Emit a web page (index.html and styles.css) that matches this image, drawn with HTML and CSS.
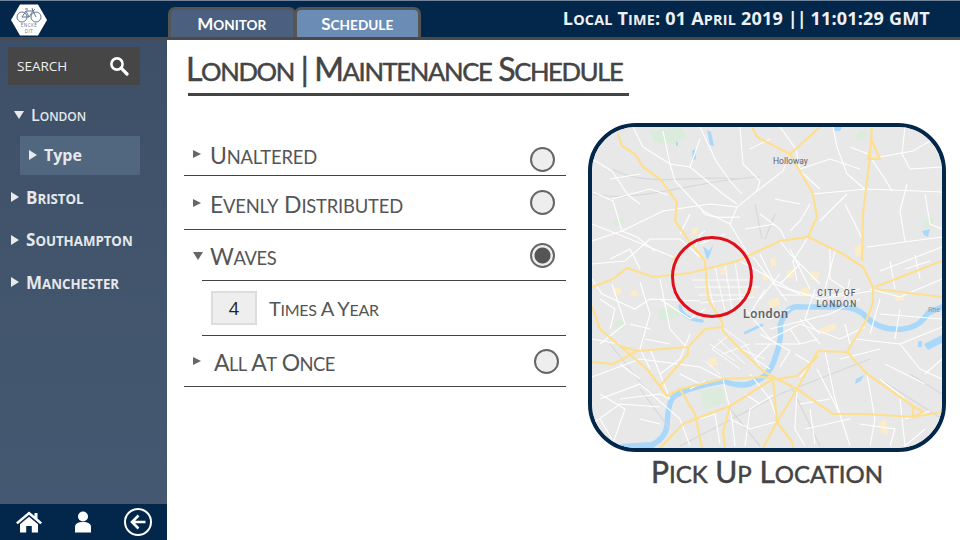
FILE: index.html
```html
<!DOCTYPE html>
<html lang="en">

<head>
    <meta charset="UTF-8">
    <title>London | Maintenance Schedule</title>
    <link rel="stylesheet" href="styles.css">
</head>

<body>
    <div class="app">
        <header class="topbar">
            <div class="logo_cell">
                <svg class="logo" viewBox="0 0 36 32" width="36" height="32">
                    <polygon points="9,0.5 27,0.5 36,16 27,31.5 9,31.5 0,16" fill="#fff" />
                    <g fill="none" stroke="#5f7690" stroke-width="1">
                        <circle cx="11" cy="13" r="5" />
                        <circle cx="25" cy="13" r="5" />
                        <path d="M11 13 L15 7 H22 L25 13 M15 7 L18 13 H11 M18 13 L22 7 M14 5 H17 M21 4 L22 7 L24 5" />
                    </g>
                    <text class="logo_text" x="18" y="23">ENCKE</text>
                    <text class="logo_text" x="18" y="29">DIT</text>
                </svg>
            </div>
            <nav class="tabs">
                <a class="tab sc">M<small>onitor</small></a>
                <a class="tab tab_on sc">S<small>chedule</small></a>
            </nav>
            <div class="clock sc">L<small>ocal</small> T<small>ime</small>: 01 A<small>pril</small> 2019 <span class="bars">||</span> 11:01:29 GMT</div>
        </header>

        <div class="body_row">
            <aside class="sidebar">
                <div class="search">
                    <span>SEARCH</span>
                    <svg viewBox="0 0 20 20" width="20" height="20">
                        <circle cx="8" cy="8" r="5.6" fill="none" stroke="#fff" stroke-width="2.6" />
                        <path d="M12.2 12.2 L18 18" stroke="#fff" stroke-width="3.2" stroke-linecap="round" />
                    </svg>
                </div>
                <ul class="tree">
                    <li class="tree_item tree_open"><i class="tri tri_down"></i><span class="sc">L<small>ondon</small></span></li>
                    <li class="tree_sub"><i class="tri"></i><span>Type</span></li>
                    <li class="tree_item"><i class="tri"></i><span class="sc">B<small>ristol</small></span></li>
                    <li class="tree_item"><i class="tri"></i><span class="sc">S<small>outhampton</small></span></li>
                    <li class="tree_item"><i class="tri"></i><span class="sc">M<small>anchester</small></span></li>
                </ul>
                <div class="side_foot">
                    <svg viewBox="0 0 26 22" width="26" height="22">
                        <path d="M13 0.5 L18.5 5 V2 H21.5 V7.5 L26 11.5 L24.3 13.3 L13 3.8 L1.7 13.3 L0 11.5 Z" fill="#fff" />
                        <path d="M13 5.8 L22 13.2 V21.5 H15.8 V15 H10.2 V21.5 H4 V13.2 Z" fill="#fff" />
                    </svg>
                    <svg viewBox="0 0 18 22" width="18" height="22">
                        <circle cx="9" cy="5.5" r="5" fill="#fff" />
                        <path d="M1 21.5 V16 C1 12.5 4 11 9 11 C14 11 17 12.5 17 16 V21.5 Z" fill="#fff" />
                    </svg>
                    <svg viewBox="0 0 30 30" width="30" height="30">
                        <circle cx="15" cy="15" r="13" fill="none" stroke="#fff" stroke-width="2" />
                        <path d="M15.5 8.5 L9 15 L15.5 21.5 M9.5 15 H22.5" fill="none" stroke="#fff" stroke-width="2.6" />
                    </svg>
                </div>
            </aside>

            <main class="content">
                <h1 class="page_title sc">L<small>ondon</small> | M<small>aintenance</small> S<small>chedule</small></h1>
                <div class="columns">
                    <div class="options">
                        <div class="opt opt_a">
                            <i class="tri tri_grey"></i><span class="opt_name sc">U<small>naltered</small></span><b class="radio"></b>
                        </div>
                        <div class="opt opt_b">
                            <i class="tri tri_grey"></i><span class="opt_name sc">E<small>venly</small> D<small>istributed</small></span><b class="radio"></b>
                        </div>
                        <div class="opt opt_c">
                            <i class="tri tri_grey tri_down"></i><span class="opt_name sc">W<small>aves</small></span><b class="radio radio_on"></b>
                        </div>
                        <div class="opt opt_d">
                            <input class="times" type="text" value="4"><span class="opt_name opt_small sc">T<small>imes</small> A Y<small>ear</small></span>
                        </div>
                        <div class="opt opt_e">
                            <i class="tri tri_grey"></i><span class="opt_name sc">A<small>ll</small> A<small>t</small> O<small>nce</small></span><b class="radio"></b>
                        </div>
                    </div>

                    <div class="map_col">
                        <div class="map">
                            <svg viewBox="592 128 350 321" width="350" height="321">
                                <rect x="592" y="128" width="350" height="321" fill="#e8e8e8" />

                                <g class="soft">
                                    <!-- parks, water patches, built up areas -->
                                    <g fill="#dcecdc">
                                        <path d="M648 132 L680 128 L688 138 L672 146 L655 144 Z" />
                                        <path d="M860 130 L868 134 L862 142 L854 140 Z" />
                                        <path d="M657 310 L678 308 L680 318 L660 322 Z" />
                                        <path d="M615 322 L626 320 L624 330 L616 332 Z" />
                                        <path d="M700 392 L722 388 L726 404 L704 410 Z" />
                                        <path d="M612 222 L622 218 L624 224 L616 228 Z" />
                                        <path d="M922 222 L934 218 L932 228 L924 230 Z" />
                                    </g>
                                    <g fill="#fbeccb">
                                        <path d="M770 260 L775 258 L776 266 L771 268 Z" />
                                        <path d="M764 274 L770 276 L768 282 L762 280 Z" />
                                        <path d="M786 272 L793 270 L794 278 L788 280 Z" />
                                        <path d="M812 272 L820 274 L817 282 L810 280 Z" />
                                        <path d="M745 288 L752 286 L754 294 L747 296 Z" />
                                        <path d="M612 290 L620 288 L622 294 L614 296 Z" />
                                        <path d="M630 293 L636 290 L638 296 L632 298 Z" />
                                        <path d="M768 302 L778 298 L780 306 L770 310 Z" />
                                        <path d="M800 290 L808 288 L810 296 L802 298 Z" />
                                        <path d="M854 248 L862 244 L864 254 L856 258 Z" />
                                        <path d="M895 298 L905 296 L904 301 L896 302 Z" />
                                        <path d="M708 360 L716 358 L718 366 L710 368 Z" />
                                        <path d="M878 424 L886 420 L888 436 L882 434 Z" />
                                        <path d="M820 330 L835 324 L836 330 L822 336 Z" />
                                        <path d="M692 230 L698 228 L697 236 L692 236 Z" />
                                        <path d="M720 270 L724 268 L726 275 L721 276 Z" />
                                    </g>
                                    <g fill="#a9d8fb">
                                        <path d="M703 247 L709 252 L713 246 L710 256 L707 261 Z" />
                                        <path d="M834 128 L842 128 L840 132 L835 132 Z" />
                                        <path d="M676 143 L678 143 L678 147 L676 147 Z" />
                                        <path d="M692 152 L695 150 L696 160 L693 161 Z" />
                                        <path d="M707 131 L711 133 L714 147 L710 146 Z" />
                                        <path d="M922 232 L930 230 L928 238 L924 236 Z" />
                                        <path d="M620 445 L650 443 L654 449 L620 449 Z" />
                                        <path d="M924 345 L942 336 L942 344 L928 351 Z" />
                                        <path d="M856 380 L864 376 L861 382 L855 385 Z" />
                                        <path d="M918 342 L922 342 L922 348 L918 348 Z" />
                                    </g>
                                    <g fill="none" stroke="#a9d8fb" stroke-linecap="round">
                                        <path d="M680 307 Q682 320 702 322" stroke-width="3.5" />
                                        <path d="M745 334 L762 326" stroke-width="2.5" />
                                        <path d="M650 447 Q665 440 667 427 Q668 400 676 396 Q690 388 723 382 Q745 390 755 382 Q770 378 776 356 Q782 340 780 327 Q786 306 800 308 H840 Q858 308 866 318 Q880 332 903 330 Q920 328 928 314 L942 308" stroke-width="5.5" />
                                    </g>

                                    <!-- railways -->
                                    <g fill="none" stroke="#d6d8db" stroke-width="1.2">
                                        <path d="M592 195 C640 205 700 180 760 178" />
                                        <path d="M612 170 C650 190 690 175 740 180" />
                                        <path d="M755 205 L762 240 M775 215 L765 240" />
                                        <path d="M640 390 L670 430 M790 385 L820 447" />
                                        <path d="M680 447 L780 395 L870 360 M730 410 L760 447" />
                                        <path d="M880 380 L942 420 M910 375 L942 395" />
                                        <path d="M610 345 L650 395" />
                                    </g>

                                    <!-- white streets -->
                                    <g fill="none" stroke="#fff" stroke-width="1.1">
                                        <path d="M593 193 L613 202 L622 232 L637 238 L655 252" />
                                        <path d="M633 128 L643 148 L670 165 L690 168 L723 195 L737 205" />
                                        <path d="M663 132 L670 165 L675 182 L703 212 L730 225" />
                                        <path d="M740 128 L743 165 L760 182 L757 192 L737 208 L730 225 L750 258" />
                                        <path d="M787 162 L783 172 L757 192" />
                                        <path d="M813 195 L867 190 L942 193" />
                                        <path d="M820 222 L847 195 M833 128 L837 148 L847 175 L867 192" />
                                        <path d="M880 158 L913 152 L942 135" />
                                        <path d="M907 185 L900 212 L905 242" />
                                        <path d="M867 248 L942 238 M880 272 L942 248" />
                                        <path d="M780 242 L790 255 L820 285 M808 238 L793 262 L797 282" />
                                        <path d="M753 258 L787 302" />
                                        <path d="M592 225 L630 240 L673 258" />
                                        <path d="M592 242 L622 232 L663 212 L710 205 L737 208" />
                                        <path d="M592 160 L612 172 L628 196 L640 205" />
                                        <path d="M700 128 L716 162 L730 182 L742 195" />
                                        <path d="M780 128 L796 150 L800 172 L820 190" />
                                        <path d="M905 128 L902 155 L910 170 L942 168" />
                                        <path d="M850 148 L868 155 L885 180 L892 192" />
                                        <path d="M925 195 L930 225 L942 230" />
                                        <path d="M810 205 L800 222 L790 232" />
                                        <path d="M760 215 L780 230 L785 240" />
                                        <path d="M845 205 L855 225 L862 240" />
                                        <path d="M702 212 Q705 220 740 218 M705 232 Q698 235 695 250" />
                                        <path d="M592 265 L625 262 L650 240 L680 240 L700 258" />
                                        <path d="M592 280 L602 295 L635 310 L650 300 L700 302" />
                                        <path d="M640 283 L650 315 L640 350 M660 280 L670 330 L688 350" />
                                        <path d="M612 285 L625 325 L600 345" />
                                        <path d="M740 262 L790 290 L820 300 L872 292" />
                                        <path d="M760 255 L775 285 L800 295 M790 250 L810 290 M830 250 L830 280 L845 290" />
                                        <path d="M835 252 L825 290 M860 290 L835 296 L780 296" />
                                        <path d="M745 310 L770 340 L800 325 L840 340 L865 328" />
                                        <path d="M770 330 L830 315 L860 300" />
                                        <path d="M870 290 L900 298 L942 280 M880 315 L942 320 M900 345 L942 328" />
                                        <path d="M890 262 L895 290 M915 256 L920 280 M905 270 L930 262" />
                                        <path d="M855 340 L900 345 L920 370 L942 380" />
                                        <path d="M820 345 L800 320 M825 352 L835 400 L850 447" />
                                        <path d="M867 375 L875 420 L870 447 M900 400 L905 447 L925 430" />
                                        <path d="M723 380 L732 420 L735 447" />
                                        <path d="M755 345 L800 345 L818 340" />
                                        <path d="M592 340 L620 345 M592 378 L640 360 L700 368 L723 380" />
                                        <path d="M600 400 L640 385 L680 420 L690 447" />
                                        <path d="M612 447 L625 410 L600 395 M620 400 L660 395 L670 400" />
                                        <path d="M592 425 L620 405 L660 408" />
                                        <path d="M775 423 L750 430 L730 420 M745 447 L750 410 L775 395" />
                                        <path d="M797 390 L795 430 L805 447 M800 405 L830 400 M805 430 L850 420" />
                                        <path d="M817 370 L840 415 M840 360 L880 350 M750 375 L770 400 L777 420" />
                                        <path d="M690 335 L680 360 L660 375 M650 350 L668 395" />
                                        <path d="M880 380 L905 400 M925 375 L942 360 M885 365 L925 385" />
                                        <path d="M795 355 L812 365 L800 378 M760 335 L790 352 L780 368" />
                                        <path d="M690 390 L705 382 M640 420 L660 425 M905 420 L930 412" />
                                        <path d="M612 200 L650 190 L668 196 M640 175 L610 180" />
                                        <path d="M690 168 L700 140 M770 140 L750 150 M800 170 L830 160 L860 170" />
                                        <path d="M690 215 L680 235 M725 235 L700 245 M745 230 L775 225 M775 200 L800 205" />
                                        <path d="M610 260 L630 250 L640 270 M600 300 L615 310 L610 330 M630 325 L650 330" />
                                        <path d="M660 300 L690 320 L705 310 M672 285 L680 300 M645 340 L670 345" />
                                        <path d="M765 290 L750 315 L770 320 L790 310 M780 275 L760 300 M800 265 L780 285" />
                                        <path d="M815 290 L805 320 L820 335 M850 280 L845 300 M880 300 L870 335 M900 310 L895 340" />
                                        <path d="M770 345 L755 360 L770 370 M790 330 L800 345 M845 325 L850 345" />
                                        <path d="M620 365 L640 380 M680 375 L700 385 M640 350 L650 370 M600 420 L612 440" />
                                        <path d="M700 420 L715 415 L720 445 M745 395 L760 405 M810 410 L815 445 M860 425 L895 430 L890 447" />
                                    </g>
                                    <g fill="none" stroke="#fff" stroke-width=".9">
                                        <path d="M692 281 H755 M695 288 H760 M698 296 H750 M700 304 L755 298" />
                                        <path d="M705 272 L715 312 M715 268 L725 312 M725 265 L732 310 M735 262 L742 310" />
                                        <path d="M722 328 L745 345 L763 372 M730 335 L712 350 L740 370 M718 340 L745 365 M710 345 L735 362" />
                                        <path d="M722 355 L750 345 M705 362 L720 375 M740 350 L765 360" />
                                    </g>

                                    <!-- main roads -->
                                    <g fill="none" stroke="#fddf8e" stroke-width="2.2">
                                        <path d="M618 135 L622 147 L635 155 L643 168 L660 180 L677 203 L675 222 L690 243 L705 262 L708 300 L722 323 L723 332 L737 347 L763 372 L777 380" />
                                        <path d="M592 288 L613 280 L627 269 L653 278 L690 274 L737 262 L780 242 L808 238 L843 255 L863 268 L873 288 L873 305" />
                                        <path d="M752 128 L757 138 L790 155 L813 195 L817 218 L808 238 M820 128 L790 155" />
                                        <path d="M872 128 L870 158 L863 215 L862 262 M872 142 L880 160 H868 Z" />
                                        <path d="M875 290 L942 298 M875 288 L942 262" />
                                        <path d="M592 307 L600 330 L620 347 L637 352 L688 348 L705 330 L722 328" />
                                        <path d="M592 363 L613 365 L637 352" />
                                        <path d="M620 347 L647 370 L667 397 L680 390 L723 380 L763 378 L777 380" />
                                        <path d="M688 348 V355 L660 387" />
                                        <path d="M680 390 L695 415 L702 449" />
                                        <path d="M660 449 L683 425 L695 420 L730 407 L773 380" />
                                        <path d="M730 407 L723 433 L725 449" />
                                        <path d="M773 380 L777 423 L792 443 L793 449" />
                                        <path d="M763 449 L777 423 L797 390 L818 352 L847 353 L867 320 L873 303" />
                                        <path d="M847 353 L867 375 L913 407 L923 413 L913 418 V407" />
                                        <path d="M777 380 L797 390 L833 415 L867 415 L913 418 L942 413" />
                                        <path d="M777 380 L797 377 L818 357" />
                                        <path d="M690 245 L680 255 L672 262" />
                                    </g>
                                </g>

                                <g class="map_labels">
                                    <text class="lab_small" x="773" y="165">Holloway</text>
                                    <text class="lab_city" x="837" y="297" text-anchor="middle">CITY OF</text>
                                    <text class="lab_city" x="837" y="307.5" text-anchor="middle">LONDON</text>
                                    <text class="lab_town" x="743" y="319">London</text>
                                    <text class="lab_water" x="928" y="313">Rhe</text>
                                </g>
                                <circle cx="712" cy="278" r="39.5" fill="none" stroke="#df0f1c" stroke-width="3" />
                            </svg>
                        </div>
                        <div class="map_caption sc">P<small>ick</small> U<small>p</small> L<small>ocation</small></div>
                    </div>
                </div>
            </main>
        </div>
    </div>
</body>

</html>
```

FILE: styles.css
```css
* {
    box-sizing: border-box;
}

html,
body {
    margin: 0;
    height: 100%;
    overflow: hidden;
}

body {
    font-family: "Lato", "Liberation Sans", sans-serif;
    background: #fff;
}

.app {
    width: 960px;
    height: 540px;
    display: flex;
    flex-direction: column;
}

/* small caps the way the slides had them, lower case at 80% */
.sc {
    text-transform: uppercase;
    white-space: nowrap;
}

.sc small {
    font-size: 80%;
}

/* top bar */
.topbar {
    height: 40px;
    display: flex;
    align-items: flex-end;
    background: #03274a;
    border-top: 1px solid #71849b;
    border-bottom: 3px solid #4a4a4a;
}

.logo_cell {
    width: 168px;
    height: 36px;
    padding: 3px 0 0 11px;
}

.logo {
    display: block;
}

.logo_text {
    font: 4.5px "Open Sans", sans-serif;
    fill: #5f7690;
    text-anchor: middle;
    letter-spacing: .5px;
}

.tabs {
    display: flex;
    width: 253px;
    height: 30px;
}

.tab {
    flex: 1;
    display: block;
    text-align: center;
    line-height: 28px;
    border: 3px solid #555;
    border-bottom: none;
    border-radius: 7px 7px 0 0;
    background: #4a607e;
    color: #fff;
    font-size: 17px;
    font-weight: bold;
}

.tab_on {
    margin-left: -2px;
    background: #6b8cb5;
}

.clock {
    flex: 1;
    height: 36px;
    padding-right: 30px;
    text-align: right;
    color: #eef1f4;
    font: bold 18px/34px "Open Sans", sans-serif;
    letter-spacing: .2px;
}

.bars {
    letter-spacing: -1px;
}

.body_row {
    flex: 1;
    display: flex;
    min-height: 0;
}

/* left side */
.sidebar {
    width: 167px;
    display: flex;
    flex-direction: column;
    background: linear-gradient(#3e5068, #455a72);
}

.search {
    margin: 7px 27px 0 8px;
    height: 38px;
    padding: 0 11px 0 9px;
    display: flex;
    align-items: center;
    justify-content: space-between;
    background: #464646;
    color: #eee;
    font: 13.5px "Open Sans", sans-serif;
}

.tree {
    flex: 1;
    list-style: none;
    margin: 0;
    padding: 19px 0 0;
    color: #e6e8ea;
    font: bold 17px "Open Sans", sans-serif;
}

.tree .sc small {
    font-size: 78%;
}

.tree_item {
    height: 42.5px;
    padding: 0 0 2px 11px;
    display: flex;
    align-items: center;
    gap: 7px;
}

.tree_open {
    height: 22px;
    padding-left: 14px;
    padding-bottom: 0;
    margin-bottom: 10px;
    font-size: 16px;
    font-weight: 600;
}

.tree_open .sc small {
    font-size: 75%;
}

.tree_sub {
    width: 120px;
    height: 39px;
    margin: 0 0 2px 20px;
    padding: 0 0 2px 9px;
    display: flex;
    align-items: center;
    gap: 7px;
    background: #51667f;
    font-size: 16px;
    font-weight: bold;
}

.tri {
    width: 0;
    height: 0;
    flex: none;
    border-style: solid;
    border-width: 5px 0 5px 8px;
    border-color: transparent transparent transparent #e8eaec;
}

.tri_down {
    border-width: 8px 5px 0 5px;
    border-color: #e8eaec transparent transparent transparent;
}

.tri_grey {
    border-width: 4.5px 0 4.5px 8px;
    border-left-color: #666;
}

.tri_grey.tri_down {
    border-width: 8px 5.5px 0 5.5px;
    border-color: #666 transparent transparent transparent;
}

.side_foot {
    height: 36px;
    display: flex;
    align-items: center;
    justify-content: space-between;
    padding: 0 14px 0 16px;
    background: #03274a;
}

/* main */
.content {
    flex: 1;
    padding: 7px 14px 0 17px;
}

.page_title {
    width: 441px;
    height: 49px;
    margin: 0 0 0 4px;
    border-bottom: 3px solid #444;
    color: #444;
    font: normal 32px/44px "Lato", sans-serif;
    -webkit-text-stroke: .5px #444;
    letter-spacing: -1.35px;
    text-indent: -2px;
}

.columns {
    display: flex;
    justify-content: space-between;
    padding-top: 27px;
}

.options {
    width: 382px;
    padding-top: 9px;
}

.opt {
    display: flex;
    align-items: center;
    border-bottom: 1px solid #444;
    padding-left: 9px;
    color: #555;
}

.opt_a {
    height: 44px;
}

.opt_b {
    height: 54px;
}

.opt_c {
    height: 51px;
    border-bottom: none;
    background: linear-gradient(#444, #444) no-repeat 18px 100% / 364px 1px;
}

.opt_d {
    height: 55px;
    margin-left: 18px;
}

.opt_e {
    height: 51px;
}

.opt_name {
    margin-left: 9px;
    font-size: 23px;
    letter-spacing: -.2px;
    color: #555;
}

.opt_a .opt_name,
.opt_b .opt_name,
.opt_e .opt_name {
    padding-top: 2px;
}

.opt_small {
    font-size: 20px;
    letter-spacing: -.3px;
    margin-left: 12px;
}

.opt_c .opt_name {
    margin-left: 7px;
    letter-spacing: -.4px;
}

.opt_e .opt_name {
    margin-left: 13px;
    letter-spacing: -.6px;
}

.radio {
    width: 25px;
    height: 25px;
    margin-left: auto;
    margin-right: 11px;
    border: 2px solid #666;
    border-radius: 50%;
    background: #eee;
}

.opt_a .radio {
    margin-top: 12px;
}

.opt_e .radio {
    margin-right: 7px;
}

.radio_on {
    background: radial-gradient(circle, #555 0 7.5px, #eee 8.5px);
}

.times {
    width: 46px;
    height: 34px;
    border: 2px solid #ddd;
    background: #eee;
    color: #222;
    text-align: center;
    font: 18px "Open Sans", sans-serif;
    padding: 0;
}

.map_col {
    width: 358px;
}

.map {
    width: 358px;
    height: 329px;
    border: 4px solid #03274a;
    border-radius: 48px;
    overflow: hidden;
}

.map svg {
    display: block;
}

.soft {
    filter: blur(.35px);
}

.map_labels text {
    font-family: "Roboto", sans-serif;
    fill: #5f6368;
}

.lab_small {
    font-size: 8.5px;
}

.lab_city {
    font-size: 8.5px;
    font-weight: 500;
    letter-spacing: 1.2px;
}

.lab_town {
    font-size: 12.5px;
    font-weight: 500;
    letter-spacing: .6px;
}

.map_labels .lab_water {
    font-size: 7px;
    fill: #7c98b4;
}

.map_caption {
    text-align: center;
    color: #444;
    font: normal 30px/38px "Lato", sans-serif;
    -webkit-text-stroke: .5px #444;
}
```
